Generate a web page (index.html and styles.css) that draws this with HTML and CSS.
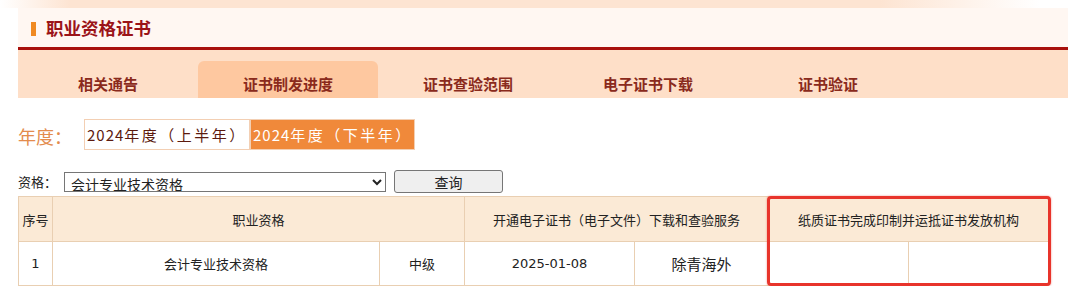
FILE: index.html
```html
<!DOCTYPE html>
<html lang="zh-CN">
<head>
<meta charset="utf-8">
<title>职业资格证书</title>
<link rel="stylesheet" href="styles.css">
</head>
<body>
<div class="top-strip"></div>
<div class="page">
  <div class="title-bar">
    <span class="marker"></span>
    <h1 class="title">职业资格证书</h1>
  </div>
  <nav class="tabs">
    <a class="tab">相关通告</a>
    <a class="tab active">证书制发进度</a>
    <a class="tab">证书查验范围</a>
    <a class="tab">电子证书下载</a>
    <a class="tab">证书验证</a>
  </nav>
  <div class="year-row">
    <span class="year-label">年度：</span>
    <span class="year-btn first"><span class="num">2024</span>年度（上半年）</span>
    <span class="year-btn second on"><span class="num">2024</span>年度（下半年）</span>
  </div>
  <div class="query-row">
    <span class="query-label">资格：</span>
    <select class="query-select"><option>会计专业技术资格</option></select>
    <button class="query-btn" type="button">查询</button>
  </div>
  <div class="table-wrap">
    <table class="progress">
      <colgroup>
        <col class="c1"><col class="c2"><col class="c3"><col class="c4"><col class="c5"><col class="c6"><col class="c7">
      </colgroup>
      <thead>
        <tr>
          <th>序号</th>
          <th colspan="2">职业资格</th>
          <th colspan="2">开通电子证书（电子文件）下载和查验服务</th>
          <th colspan="2">纸质证书完成印制并运抵证书发放机构</th>
        </tr>
      </thead>
      <tbody>
        <tr>
          <td>1</td>
          <td>会计专业技术资格</td>
          <td>中级</td>
          <td class="date">2025-01-08</td>
          <td class="big">除青海外</td>
          <td></td>
          <td></td>
        </tr>
      </tbody>
    </table>
    <div class="highlight"></div>
  </div>
</div>
</body>
</html>
```

FILE: styles.css
```css
html, body {
  margin: 0;
  padding: 0;
  background: #ffffff;
}
body {
  font-family: "Noto Sans CJK SC", sans-serif;
  color: #222;
}
.top-strip {
  height: 8px;
  background: linear-gradient(to right, #ffffff 0, #fde4d2 70px, #fde4d2 880px, #ffffff 1040px);
}
.page {
  margin-left: 18px;
  width: 1050px;
}
.title-bar {
  height: 39px;
  background: #fff7f2;
  border-bottom: 3px solid #a8100c;
  display: flex;
  align-items: center;
  padding-left: 13px;
}
.marker {
  width: 5px;
  height: 14px;
  background: #f08a22;
  margin-top: 3px;
  margin-right: 10px;
}
.title {
  margin: 0;
  font-size: 17.5px;
  font-weight: bold;
  color: #9b1418;
  line-height: 20px;
}
.tabs {
  display: flex;
  height: 37px;
  padding-top: 11px;
  background: #fedfc8;
}
.tab {
  width: 180px;
  height: 37px;
  box-sizing: border-box;
  padding-top: 15px;
  line-height: 16px;
  text-align: center;
  font-size: 15px;
  font-weight: bold;
  color: #8a2a1c;
}
.tab.active {
  background: #fec8a0;
  border-radius: 6px 6px 0 0;
}
.year-row {
  display: flex;
  align-items: center;
  margin-top: 21px;
  height: 31px;
}
.year-label {
  width: 66px;
  font-size: 18px;
  color: #e38b4d;
  margin-top: 3px;
}
.year-btn {
  box-sizing: border-box;
  height: 31px;
  border: 1px solid #f3cfb3;
  font-size: 15px;
  letter-spacing: 2.5px;
  line-height: 29px;
  padding-left: 2px;
  white-space: nowrap;
  overflow: hidden;
  color: #5c1a0e;
  background: #ffffff;
}
.year-btn .num {
  letter-spacing: 1px;
}
.year-btn.first {
  width: 166px;
}
.year-btn.second {
  width: 165px;
}
.year-btn.on {
  background: #f0893a;
  color: #ffffff;
}
.query-row {
  display: flex;
  align-items: center;
  margin-top: 20px;
  height: 23px;
}
.query-label {
  width: 46px;
  font-size: 13px;
  color: #222;
}
.query-select {
  width: 322px;
  height: 20px;
  font-size: 14px;
  font-family: "Noto Sans CJK SC", sans-serif;
  padding: 0 2px;
  margin: 0;
  border: 1px solid #767676;
  border-radius: 0;
  background: #fff;
  color: #222;
}
.query-btn {
  width: 109px;
  height: 23px;
  margin: 0 0 0 8px;
  font-size: 14px;
  font-family: "Noto Sans CJK SC", sans-serif;
  border: 1px solid #767676;
  border-radius: 3px;
  background: #efefef;
  color: #222;
  padding: 0;
}
.table-wrap {
  position: relative;
  margin-top: 3px;
  width: 1030px;
}
.progress {
  width: 1030px;
  border-collapse: collapse;
  table-layout: fixed;
  font-family: "DejaVu Sans", "Noto Sans CJK SC", sans-serif;
  font-size: 13px;
}
.progress col.c1 { width: 34px; }
.progress col.c2 { width: 327px; }
.progress col.c3 { width: 85px; }
.progress col.c4 { width: 170px; }
.progress col.c5 { width: 134px; }
.progress col.c6 { width: 140px; }
.progress col.c7 { width: 140px; }
.progress th, .progress td {
  border: 1px solid #e9cfb2;
  text-align: center;
  padding: 0;
  font-weight: normal;
  white-space: nowrap;
}
.progress thead tr {
  height: 45px;
}
.progress th {
  background: #fbead6;
  color: #222;
  font-family: "Noto Sans CJK SC", sans-serif;
}
.progress tbody tr {
  height: 44px;
}
.progress td {
  color: #222;
}
.progress td.big {
  font-size: 15px;
}
.highlight {
  position: absolute;
  left: 749px;
  top: 0;
  width: 284px;
  height: 90px;
  box-sizing: border-box;
  border: 3px solid #e8342b;
  border-radius: 4px;
  box-shadow: 0 0 2px rgba(232, 52, 43, 0.6);
}
```
